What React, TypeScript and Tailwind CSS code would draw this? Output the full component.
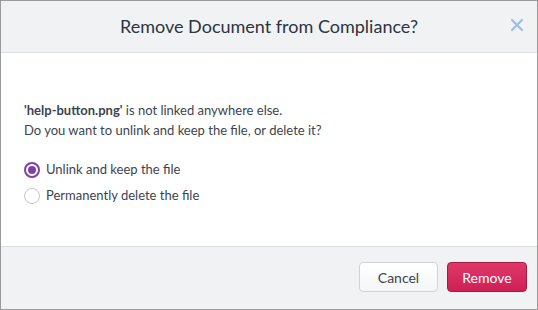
export default function App() {
  return (
    <div
      className="w-[538px] h-[310px] bg-white border border-[#9a9a9a] flex flex-col"
      style={{ fontFamily: 'Lato, "Noto Sans", sans-serif' }}
    >
      {/* Header */}
      <div className="h-[52px] shrink-0 bg-[#f1f2f4] border-b border-[#dcdee2] flex items-center justify-center relative">
        <h2 className="text-[18px] text-[#2b3441]">Remove Document from Compliance?</h2>
        <button className="absolute right-[13px] top-[17px] text-[#9dbcec]">
          <svg width="14" height="14" viewBox="0 0 14 14" fill="none" stroke="currentColor" strokeWidth="2.2" strokeLinecap="round">
            <path d="M2 2L12 12M12 2L2 12" />
          </svg>
        </button>
      </div>

      {/* Body */}
      <div className="flex-1 px-[23px] pt-[47px] text-[13px] text-[#3c4450]">
        <p className="leading-[20px]">
          <span className="font-bold">'help-button.png'</span> is not linked anywhere else.
          <br />
          Do you want to unlink and keep the file, or delete it?
        </p>
        <div className="mt-[20px] flex flex-col gap-[6px]">
          <label className="flex items-center gap-[6px] h-[20px]">
            <span className="w-[16px] h-[16px] rounded-full border-2 border-[#7e3fa9] flex items-center justify-center">
              <span className="w-[8px] h-[8px] rounded-full bg-[#7e3fa9]" />
            </span>
            Unlink and keep the file
          </label>
          <label className="flex items-center gap-[6px] h-[20px]">
            <span className="w-[16px] h-[16px] rounded-full border border-[#c3c6cc] bg-white" />
            Permanently delete the file
          </label>
        </div>
      </div>

      {/* Footer */}
      <div className="h-[63px] shrink-0 bg-[#f1f2f4] border-t border-[#dcdee2] flex items-center justify-end gap-[9px] pr-[10px] pb-[2px]">
        <button className="w-[79px] h-[30px] rounded-[4px] border border-[#cfd2d7] bg-gradient-to-b from-white to-[#f5f6f7] text-[14px] text-[#3c4450]">
          Cancel
        </button>
        <button className="w-[80px] h-[30px] rounded-[4px] border border-[#a91a47] bg-gradient-to-b from-[#df3768] to-[#cf1f56] text-[14px] text-white">
          Remove
        </button>
      </div>
    </div>
  )
}
